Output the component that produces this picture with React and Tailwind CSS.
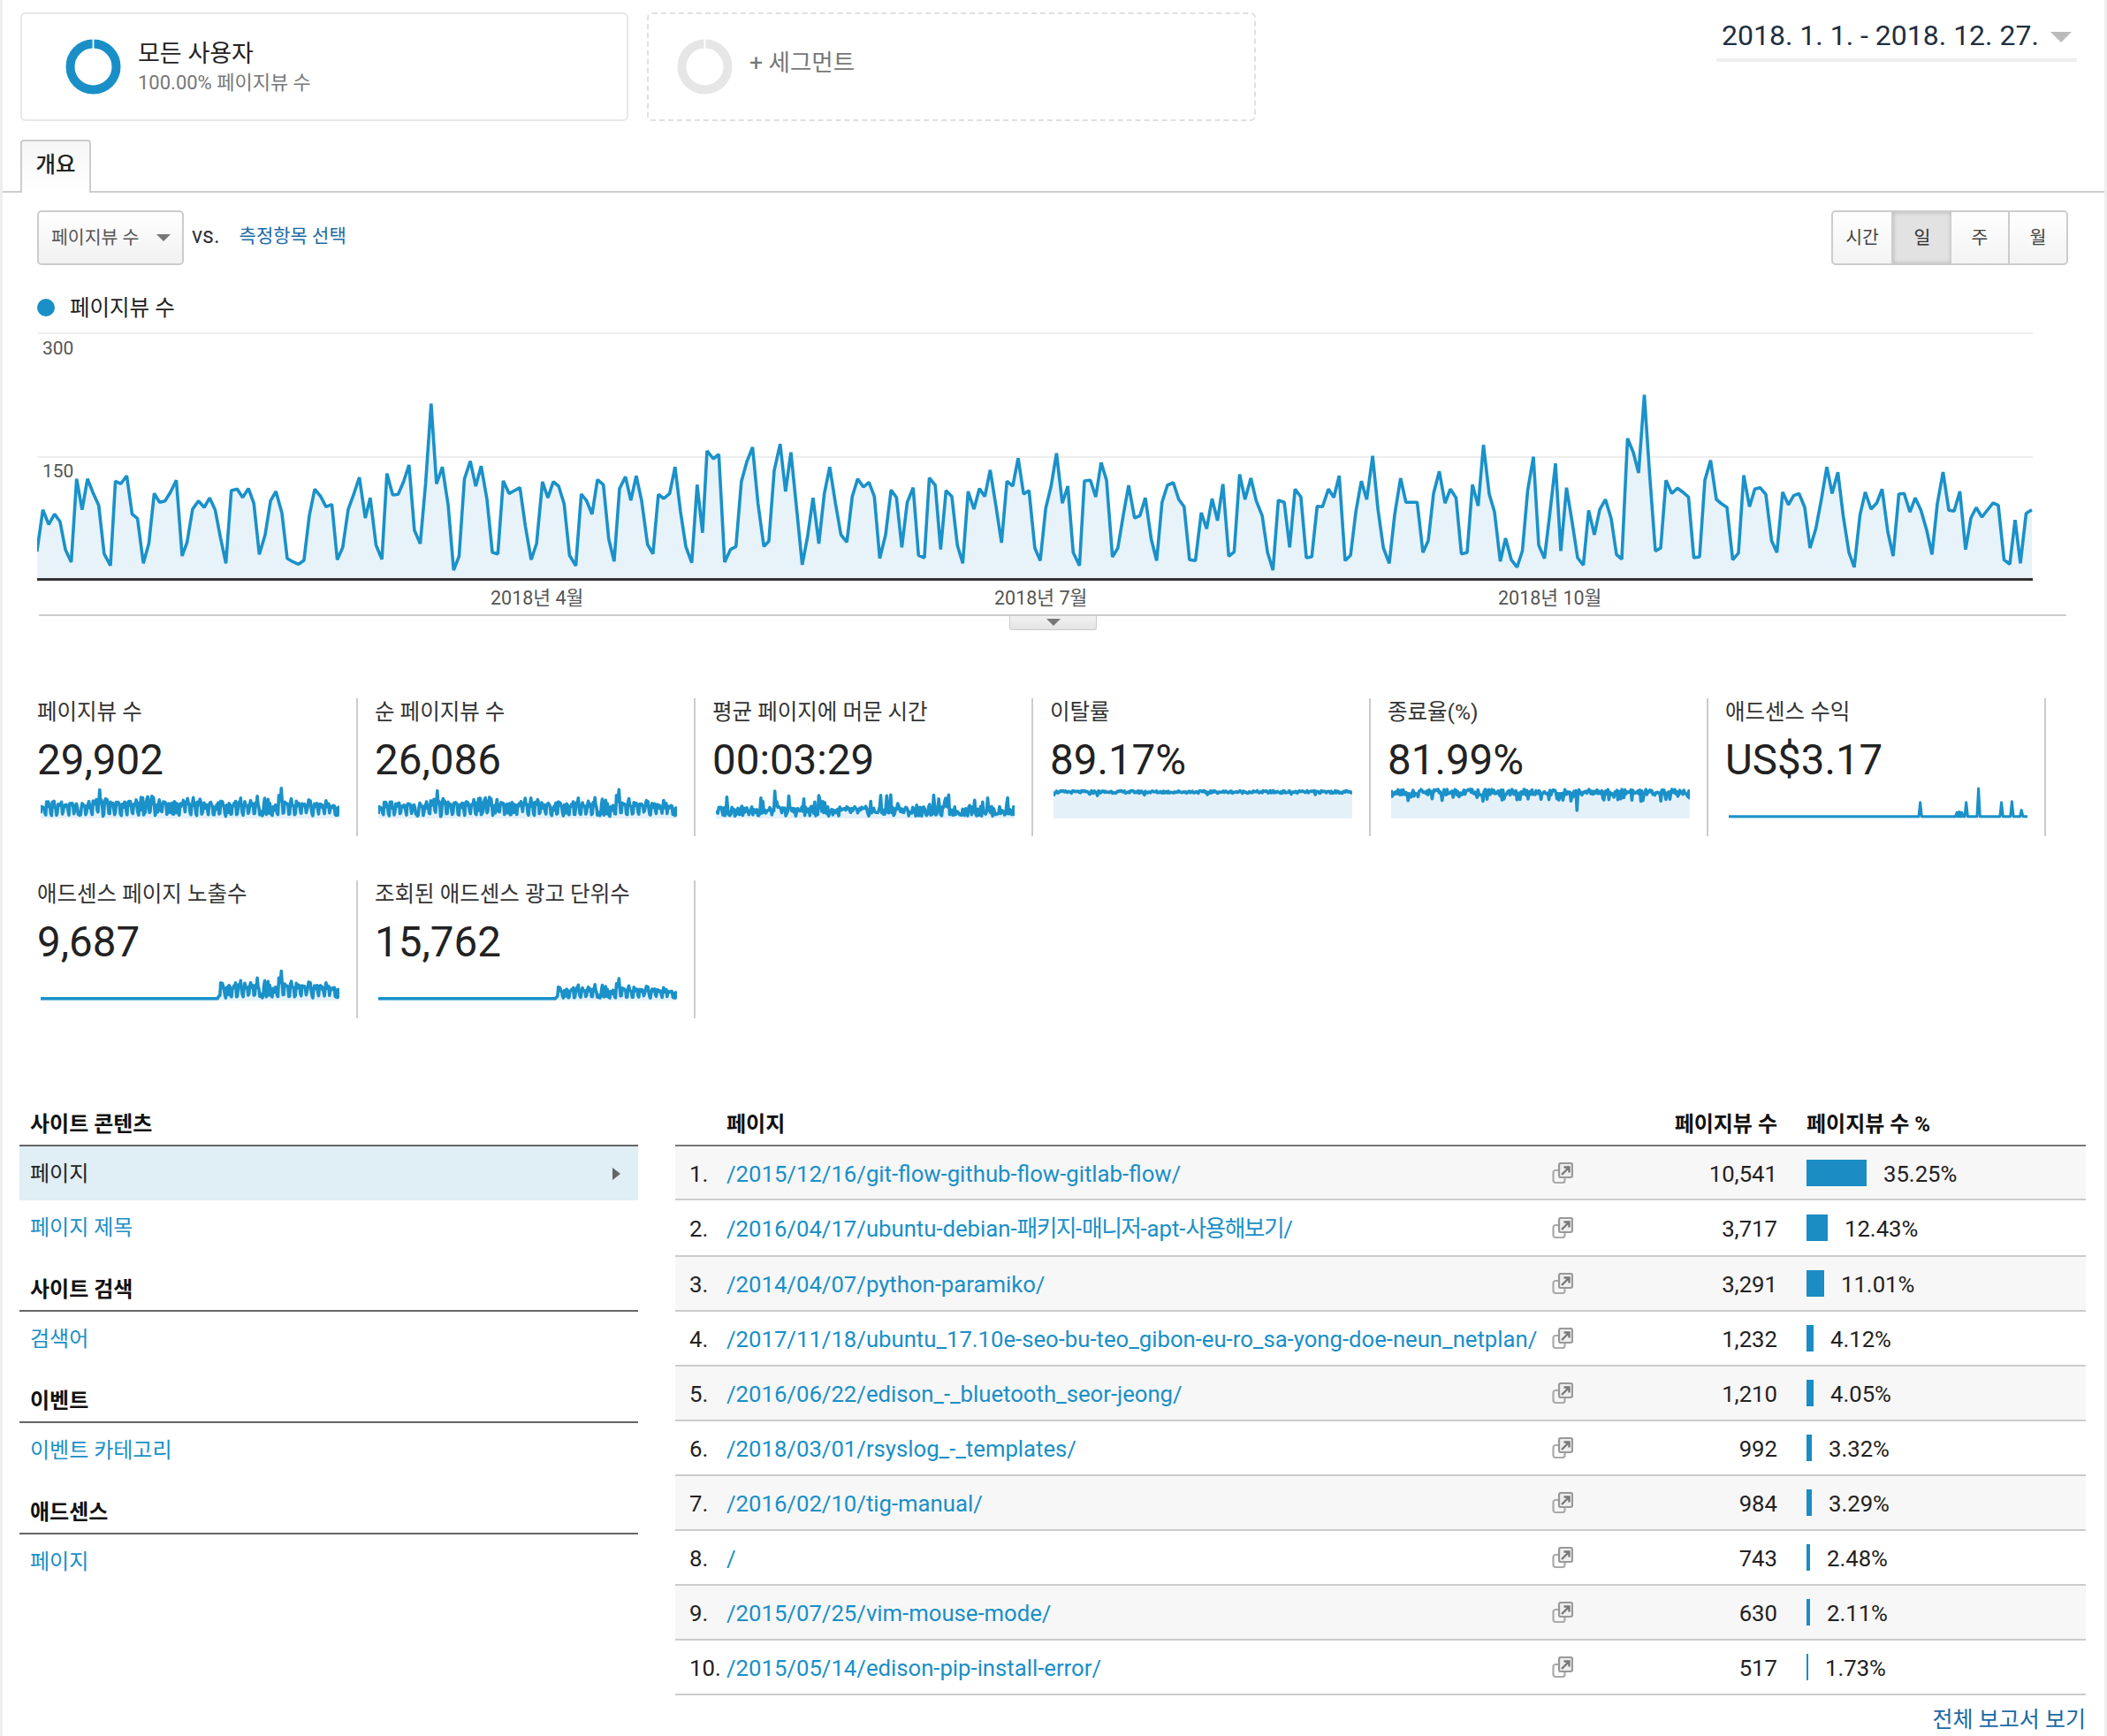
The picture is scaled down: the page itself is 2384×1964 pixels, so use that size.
import React from "react";

const LINK = "text-[#1a8fc7]";
const BLUE = "#1a91c9";

// chart vertices read off the report, [x, y] in page pixels
const toPts = (raw, ox, sx) => {
  const out = [];
  for (let i = 0; i < raw.length; i += 2) out.push([ox + raw[i] / sx, 370 + raw[i + 1] / 3]);
  return out;
};
const seg1 = [82,762,95,620,108,670,121,635,133,660,145,755,158,798,170,515,182,620,194,515,207,565,219,605,231,770,245,810,256,523,268,532,281,505,293,635,305,650,318,802,330,735,342,565,354,595,366,590,378,560,391,520,404,777,415,730,427,618,440,590,453,612,465,580,477,620,489,715,501,802,513,555,526,550,538,578,551,548,563,598,575,772,588,705,600,590,612,558,625,630,637,785,650,797,662,805,674,792,686,640,698,550,711,575,723,610,736,602,748,790,760,748,772,620,785,565,797,510,810,648,821,580,834,740,847,788,858,497,871,570,883,568,895,525,907,468,919,690,932,735,944,530,956,260,968,532,981,475,994,605,1006,825,1018,778,1030,515,1043,455,1055,540,1067,472,1080,585,1092,765,1104,770,1116,522,1129,565,1141,555,1153,545,1165,675,1178,790,1190,735,1203,525,1215,580,1227,525,1239,540,1251,600,1263,775,1277,810,1289,567,1301,590,1313,635,1325,518,1338,535,1350,720,1362,795,1374,548,1387,508,1399,588,1411,505,1423,590,1436,738,1448,770,1460,568,1472,582,1485,565,1497,475,1509,625,1521,745,1534,800,1546,535,1558,698,1568,420];
const seg2 = [14,447,26,432,39,798,52,755,64,745,76,525,88,458,101,408,113,600,126,745,137,727,149,487,162,397,174,558,186,425,199,620,211,807,223,710,235,580,248,735,260,565,272,475,285,600,297,705,310,730,322,575,334,515,347,543,359,527,371,575,383,785,396,705,408,553,420,578,432,748,444,595,457,545,469,775,482,783,493,512,506,537,518,755,530,555,543,575,555,740,567,802,579,558,592,618,604,548,616,575,628,485,641,610,653,732,665,523,678,540,690,445,702,567,714,555,727,750,739,793,751,615,763,540,775,428,788,598,800,540,812,765,826,810,837,522,850,520,862,577,874,460,886,520,899,780,911,750,923,640,935,537,948,648,960,640,972,580,985,720,997,793,1009,595,1021,537,1034,528,1046,585,1058,610,1070,790,1083,793,1096,630,1108,685,1120,583,1132,657,1144,533,1157,778,1169,763,1181,500,1193,585,1206,513,1218,590,1231,640,1243,765,1255,825,1267,588,1280,595,1292,748,1304,550,1317,577,1329,783,1341,780,1353,608,1365,610,1378,550,1390,578,1402,505,1415,793,1427,775,1439,625,1451,523,1463,585,1476,437,1488,620,1500,750,1513,802,1525,635,1538,513,1550,595];
const seg3 = [7,595,20,765,32,725,44,565,57,490,70,598,82,550,95,580,107,770,120,765,132,535,145,607,157,400,170,567,182,628,195,795,207,717,220,790,233,815,245,760,257,555,270,440,282,740,295,785,307,635,320,463,332,760,345,545,358,665,370,783,383,808,395,622,408,705,420,620,433,585,446,650,458,772,470,788,483,378,496,425,508,495,521,230,533,500,546,760,558,750,570,520,583,565,596,547,608,560,621,577,633,783,646,780,658,520,671,452,684,585,696,600,708,612,721,790,734,767,746,503,759,610,771,550,783,545,796,568,809,725,821,765,834,560,847,603,859,572,871,565,884,612,896,750,909,685,921,590,934,475,946,565,959,493,971,640,984,765,996,815,1009,638,1021,560,1034,618,1047,597,1059,550,1072,695,1084,777,1097,567,1109,565,1122,628,1134,580,1147,622,1160,690,1172,772,1184,600,1197,492,1210,622,1222,625,1235,558,1248,755,1260,648,1272,613,1285,645,1310,597,1322,605,1335,790,1348,805,1360,655,1372,802,1385,632,1398,620];

const mainPts = [...toPts(seg1, 0, 1.96), ...toPts(seg2, 800, 1.96), ...toPts(seg3, 1600, 2)];
const CHART_X = 42;
const CHART_TOP = 376;
const CHART_BASE = 655;
const CHART_R = 2299;
const CHART_PEAK = 447;

const pathOf = (pts) => pts.map((p) => `${p[0].toFixed(1)},${p[1].toFixed(1)}`).join(" ");

// unit series, x and y from 0 to 1
const mainSeries = mainPts.map(([x, y]) => [
  (x - CHART_X) / (CHART_R - CHART_X),
  Math.max(0, CHART_BASE - y) / (CHART_BASE - CHART_PEAK),
]);
const noise = (i, s) => {
  const v = Math.sin(i * 12.9898 + s * 78.233) * 43758.5453;
  return v - Math.floor(v);
};
const range = (n) => Array.from({ length: n }, (_, i) => i);

const pageSpark = mainSeries;
const uniqueSpark = mainSeries.map(([x, y], i) => [x, Math.min(1, y * 0.97 + (noise(i, 1) - 0.5) * 0.06)]);
const timeSpark = range(300).map((i) => {
  const big = noise(i, 2) > 0.85 ? 0.55 : 0;
  return [i / 299, 0.05 + noise(i, 3) * 0.34 + big * noise(i, 4) + (i === 175 ? 0.6 : 0)];
});
const bounceSpark = range(300).map((i) => [i / 299, 0.88 + (noise(i, 5) - 0.5) * 0.09 - (noise(i, 6) > 0.96 ? 0.1 : 0)]);
const exitSpark = range(300).map((i) => {
  let d = noise(i, 7) * 0.2;
  if (noise(i, 8) > 0.88) d += 0.22;
  if (i === 186) d = 0.72;
  return [i / 299, 0.97 - d];
});
const revenueSpark = (() => {
  const spikes = { 0.641: 0.52, 0.764: 0.18, 0.772: 0.2, 0.78: 0.18, 0.795: 0.52, 0.836: 1, 0.913: 0.52, 0.948: 0.55, 0.98: 0.26 };
  const pts = [[0, 0.04]];
  Object.entries(spikes).forEach(([x, h]) => {
    const v = Number(x);
    pts.push([v - 0.005, 0.04], [v, h], [v + 0.005, 0.04]);
  });
  pts.push([1, 0.04]);
  return pts;
})();
const startLate = (scale, s) => {
  const pts = [[0, 0.04], [0.592, 0.04]];
  mainSeries.forEach(([x, y], i) => {
    if (x > 0.597) pts.push([x, Math.max(0.06, y * scale + (noise(i, s) - 0.5) * 0.04)]);
  });
  return pts;
};
const adPageSpark = startLate(1, 9);
const adUnitSpark = startLate(0.74, 10);

const Spark = ({ data, thin }) => {
  const W = 338;
  const H = 36;
  const pts = data.map(([x, y]) => [x * W, 2 + (1 - y) * (H - 3)]);
  return (
    <svg width={W} height={H} viewBox={`0 0 ${W} ${H}`} className="ml-1 mt-[2px] blur-[0.6px]">
      <polygon points={`0,${H} ${pathOf(pts)} ${W},${H}`} fill="#e5f1f9" />
      <polyline points={pathOf(pts)} fill="none" stroke={BLUE} strokeWidth={thin ? 3 : 3.6} strokeLinejoin="round" />
    </svg>
  );
};

const Donut = ({ color }) => (
  <svg width="63" height="63" viewBox="0 0 63 63" className="shrink-0">
    <circle cx="31.5" cy="31.5" r="26" fill="none" stroke={color} strokeWidth="10" />
    <rect x="30.6" y="0" width="1.8" height="12" fill="#fff" />
  </svg>
);

const Card = ({ title, value, spark, thin }) => (
  <div className="h-[156px] pl-[19px] pt-[2px] border-r-2 border-[#ccc]">
    <div className="text-[24.5px] leading-[28px] text-[#333] whitespace-nowrap">{title}</div>
    <div className="mt-3 text-[47.5px] leading-[56px] text-[#222]">{value}</div>
    <Spark data={spark} thin={thin} />
  </div>
);

const ExternalIcon = () => (
  <svg width="24" height="24" viewBox="0 0 24 24" className="shrink-0">
    <rect x="1.5" y="9" width="13" height="14" rx="2.5" fill="none" stroke="#aaa" strokeWidth="2.2" />
    <rect x="8" y="1" width="15" height="16" rx="2" fill="#eee" stroke="#999" strokeWidth="2.2" />
    <path d="M11 14 L18 7 M13.5 5.5 H19.5 V11.5" fill="none" stroke="#777" strokeWidth="2.4" />
  </svg>
);

const Row = ({ n, path, count, bar, pct, odd, h }) => (
  <div className={`flex items-center border-b-2 border-[#ccc] text-[25.7px] ${h} ${odd ? "bg-[#f7f7f7]" : "bg-white"}`}>
    <div className="w-[58px] pl-4 pt-[3px] text-[#222] whitespace-nowrap">{n}.</div>
    <div className={`w-[934px] pt-[3px] whitespace-nowrap ${LINK}`}>{path}</div>
    <ExternalIcon />
    <div className="w-[231px] pt-[3px] text-right text-[#222]">{count}</div>
    <div className="ml-[33px] h-[30px] bg-[#1b8dc4]" style={{ width: bar }} />
    <div className="ml-[19px] pt-[3px] text-[#222]">{pct}</div>
  </div>
);

const SideHead = ({ children, className = "" }) => (
  <div className={`h-[42px] pl-3 pt-[2px] border-b-2 border-[#666] text-[24px] font-bold leading-[30px] text-[#111] ${className}`}>
    {children}
  </div>
);

const SideLink = ({ children }) => <div className={`h-[60px] pl-3 pt-[2px] flex items-center text-[24px] ${LINK}`}>{children}</div>;

const Ko = ({ children }) => <span className="tracking-[-1.5px]">{children}</span>;

const rows = [
  { id: 1, path: "/2015/12/16/git-flow-github-flow-gitlab-flow/", count: "10,541", bar: 68, pct: "35.25%", h: "h-[61px]" },
  {
    id: 2,
    path: (
      <>
        /2016/04/17/ubuntu-debian-<Ko>패키지</Ko>-<Ko>매니저</Ko>-apt-<Ko>사용해보기</Ko>/
      </>
    ),
    count: "3,717",
    bar: 24,
    pct: "12.43%",
    h: "h-[64px]",
  },
  { id: 3, path: "/2014/04/07/python-paramiko/", count: "3,291", bar: 20, pct: "11.01%", h: "h-[62px]" },
  { id: 4, path: "/2017/11/18/ubuntu_17.10e-seo-bu-teo_gibon-eu-ro_sa-yong-doe-neun_netplan/", count: "1,232", bar: 8, pct: "4.12%", h: "h-[62px]" },
  { id: 5, path: "/2016/06/22/edison_-_bluetooth_seor-jeong/", count: "1,210", bar: 8, pct: "4.05%", h: "h-[62px]" },
  { id: 6, path: "/2018/03/01/rsyslog_-_templates/", count: "992", bar: 6, pct: "3.32%", h: "h-[62px]" },
  { id: 7, path: "/2016/02/10/tig-manual/", count: "984", bar: 6, pct: "3.29%", h: "h-[62px]" },
  { id: 8, path: "/", count: "743", bar: 4, pct: "2.48%", h: "h-[62px]" },
  { id: 9, path: "/2015/07/25/vim-mouse-mode/", count: "630", bar: 4, pct: "2.11%", h: "h-[62px]" },
  { id: 10, path: "/2015/05/14/edison-pip-install-error/", count: "517", bar: 2, pct: "1.73%", h: "h-[62px]" },
];

export default function App() {
  const linePts = mainPts.map(([x, y]) => [x - CHART_X, y - CHART_TOP]);
  const base = CHART_BASE - CHART_TOP;
  const W = CHART_R - CHART_X;
  return (
    <div className="w-[2384px] h-[1964px] bg-white border-x-[3px] border-[#eee] font-[Roboto,'Noto_Sans_CJK_KR',sans-serif] overflow-hidden">
      {/* segments and date */}
      <div className="flex pt-[14px] pl-5 pr-[31px]">
        <div className="w-[688px] h-[123px] flex items-center pl-[49px] gap-[19px] border-2 border-[#e6e6e6] rounded-[6px]">
          <Donut color="#1a8fc7" />
          <div className="pt-[2px]">
            <div className="text-[27px] leading-[32px] text-[#222]">모든 사용자</div>
            <div className="mt-[3px] text-[22px] leading-[28px] text-[#777]">100.00% 페이지뷰 수</div>
          </div>
        </div>
        <div className="ml-[21px] w-[689px] h-[123px] flex items-center pl-[32px] gap-[19px] border-2 border-dashed border-[#e0e0e0] rounded-[6px]">
          <Donut color="#e6e6e6" />
          <div className="-mt-[9px] text-[26.5px] text-[#777]">+ 세그먼트</div>
        </div>
        <div className="ml-auto w-[408px] h-[56px] flex items-center pl-[6px] pr-[6px] justify-between border-b-4 border-[#eee] text-[#1f2f3f]">
          <span className="text-[32px] whitespace-nowrap">2018. 1. 1. - 2018. 12. 27.</span>
          <span className="mt-1 w-0 h-0 border-x-[12px] border-t-[12px] border-x-transparent border-t-[#bbb]" />
        </div>
      </div>

      {/* tab */}
      <div className="mt-[21px] h-[60px] pl-5 border-b-2 border-[#ccc]">
        <div className="w-[80px] h-[60px] flex items-center justify-center border-x-2 border-t-2 border-[#ccc] rounded-t-[4px] bg-linear-to-b from-[#f6f6f6] to-white text-[24.5px] font-medium text-[#222] pb-[3px]">
          개요
        </div>
      </div>

      {/* metric picker and period switch */}
      <div className="mt-5 h-[62px] flex items-center pl-[39px] pr-[41px]">
        <div className="w-[166px] h-[62px] flex items-center pl-[14px] border-2 border-[#ccc] rounded-[5px] bg-linear-to-b from-white to-[#f1f1f1]">
          <span className="text-[20.5px] text-[#555] whitespace-nowrap">페이지뷰 수</span>
          <span className="ml-5 w-0 h-0 border-x-[8px] border-t-[8px] border-x-transparent border-t-[#777]" />
        </div>
        <span className="ml-[9px] text-[25px] text-[#333] -mt-1">vs.</span>
        <span className="ml-[22px] text-[21px] text-[#1a6aa5] -mt-[2px]">측정항목 선택</span>
        <div className="ml-auto w-[268px] h-[62px] flex border-2 border-[#ccc] rounded-[5px] text-[20.5px] text-[#444] overflow-hidden bg-linear-to-b from-white to-[#f3f3f3]">
          <div className="w-[68px] flex items-center justify-center border-r-2 border-[#ccc]">시간</div>
          <div className="w-[66px] flex items-center justify-center bg-[#e2e2e2] shadow-[inset_0_0_5px_rgba(0,0,0,0.22)] text-[#333]">일</div>
          <div className="w-[66px] flex items-center justify-center border-r-2 border-[#ccc]">주</div>
          <div className="flex-1 flex items-center justify-center">월</div>
        </div>
      </div>

      {/* legend */}
      <div className="mt-[38px] h-5 flex items-center pl-[39px] gap-[17px]">
        <span className="w-5 h-5 rounded-full bg-[#1a8fc7]" />
        <span className="pt-[2px] text-[24.5px] text-[#222]">페이지뷰 수</span>
      </div>

      {/* main chart */}
      <div className="relative mt-[18px] ml-[39px] w-[2258px] h-[281px]">
        <svg width="2258" height="281" viewBox="0 0 2258 281" className="block">
          <rect x="0" y="0" width="2258" height="2" fill="#eee" />
          <rect x="0" y="140" width="2258" height="2" fill="#eee" />
          <polygon points={`0,${base} ${pathOf(linePts)} ${W},${base}`} fill="#e7f2f9" />
          <polyline points={pathOf(linePts)} fill="none" stroke={BLUE} strokeWidth="3.6" strokeLinejoin="bevel" />
          <rect x="0" y={base - 1} width="2258" height="3" fill="#333" />
        </svg>
        <span className="absolute left-[6px] top-[6px] text-[21px] leading-6 text-[#555]">300</span>
        <span className="absolute left-[6px] top-[145px] text-[21px] leading-6 text-[#555]">150</span>
      </div>
      <div className="ml-[41px] mr-[43px] h-[40px] pt-[2px] grid grid-cols-[511px_570px_570px_1fr] items-center border-b-2 border-[#ccc] text-[21.5px] text-[#555]">
        <span />
        <span>2018년 4월</span>
        <span>2018년 7월</span>
        <span>2018년 10월</span>
      </div>
      <div className="ml-[1139px] w-[99px] h-4 flex justify-center pt-[3px] rounded-b-[3px] border-x border-b border-[#ccc] bg-linear-to-b from-[#f2f2f2] to-[#e4e4e4]">
        <span className="w-0 h-0 border-x-[8px] border-t-[8px] border-x-transparent border-t-[#777]" />
      </div>

      {/* scorecards */}
      <div className="mt-[77px] ml-5 w-[2292px] grid grid-cols-6 gap-y-[50px]">
        <Card title="페이지뷰 수" value="29,902" spark={pageSpark} />
        <Card title="순 페이지뷰 수" value="26,086" spark={uniqueSpark} />
        <Card title="평균 페이지에 머문 시간" value="00:03:29" spark={timeSpark} />
        <Card title="이탈률" value="89.17%" spark={bounceSpark} />
        <Card title="종료율(%)" value="81.99%" spark={exitSpark} />
        <Card title="애드센스 수익" value="US$3.17" spark={revenueSpark} thin />
        <Card title="애드센스 페이지 노출수" value="9,687" spark={adPageSpark} />
        <Card title="조회된 애드센스 광고 단위수" value="15,762" spark={adUnitSpark} />
      </div>

      {/* explorer and table */}
      <div className="mt-[103px] ml-[19px] flex gap-[42px]">
        <div className="w-[700px]">
          <SideHead>사이트 콘텐츠</SideHead>
          <div className="h-[61px] pl-3 pr-5 flex items-center justify-between bg-[#e0eef5] text-[24px] text-[#222]">
            페이지
            <span className="w-0 h-0 border-y-[7px] border-l-[9px] border-y-transparent border-l-[#666]" />
          </div>
          <SideLink>페이지 제목</SideLink>
          <SideHead className="mt-6">사이트 검색</SideHead>
          <SideLink>검색어</SideLink>
          <SideHead className="mt-6">이벤트</SideHead>
          <SideLink>이벤트 카테고리</SideLink>
          <SideHead className="mt-6">애드센스</SideHead>
          <SideLink>페이지</SideLink>
        </div>
        <div className="w-[1596px]">
          <div className="h-[42px] pt-[2px] flex border-b-2 border-[#777] text-[24px] font-bold leading-[30px] text-[#111]">
            <div className="w-[58px]" />
            <div className="w-[958px]">페이지</div>
            <div className="w-[231px] text-right">페이지뷰 수</div>
            <div className="ml-[33px]">페이지뷰 수 %</div>
          </div>
          {rows.map((r, i) => (
            <Row key={r.id} n={r.id} odd={i % 2 === 0} {...r} />
          ))}
          <div className="mt-[14px] text-right text-[25px] leading-[28px] text-[#1a6aa5]">전체 보고서 보기</div>
        </div>
      </div>
    </div>
  );
}
